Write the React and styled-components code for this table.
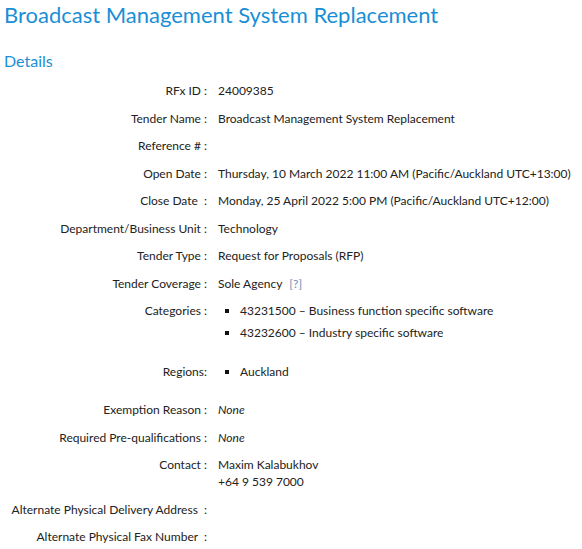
import React from 'react';
import styled, { createGlobalStyle } from 'styled-components';

const GlobalStyle = createGlobalStyle`
  html, body {
    margin: 0;
    padding: 0;
    background: #fff;
  }
  body {
    font-family: 'Lato', 'Liberation Sans', sans-serif;
    color: #222;
  }
`;

const Page = styled.div`
  padding: 0 4px;
`;

const Title = styled.h1`
  margin: 0;
  padding-top: 3px;
  font-size: 22px;
  font-weight: 400;
  line-height: 24px;
  color: #1a8fd6;
`;

const SectionTitle = styled.h2`
  margin: 24px 0 6px;
  font-size: 16px;
  font-weight: 400;
  line-height: 20px;
  color: #1a8fd6;
`;

const Details = styled.div`
  display: grid;
  grid-template-columns: 203px 1fr;
  font-size: 12px;
  line-height: 17px;
`;

const Label = styled.div`
  text-align: right;
  padding: 5.25px 0;
  white-space: pre;
`;

const Value = styled.div`
  padding: 5.25px 0 5.25px 11px;
  font-style: ${(p) => (p.$italic ? 'italic' : 'normal')};
`;

const List = styled.ul`
  list-style: none;
  margin: 0;
  padding: 0 0 6px 22px;
`;

const Item = styled.li`
  position: relative;
  margin-bottom: 5px;

  &::before {
    content: '';
    position: absolute;
    left: -15px;
    top: 7px;
    width: 4px;
    height: 4px;
    background: #111;
  }
`;

const Help = styled.span`
  margin-left: 7px;
  color: #6b8fb3;
`;

const rows = [
  { label: 'RFx ID :', value: '24009385' },
  { label: 'Tender Name :', value: 'Broadcast Management System Replacement' },
  { label: 'Reference # :', value: '' },
  { label: 'Open Date :', value: 'Thursday, 10 March 2022 11:00 AM (Pacific/Auckland UTC+13:00)' },
  { label: 'Close Date  :', value: 'Monday, 25 April 2022 5:00 PM (Pacific/Auckland UTC+12:00)' },
  { label: 'Department/Business Unit :', value: 'Technology' },
  { label: 'Tender Type :', value: 'Request for Proposals (RFP)' },
];

const App = () => {
  return (
    <Page>
      <GlobalStyle />
      <Title>Broadcast Management System Replacement</Title>
      <SectionTitle>Details</SectionTitle>
      <Details>
        {rows.map((r) => (
          <React.Fragment key={r.label}>
            <Label>{r.label}</Label>
            <Value>{r.value}</Value>
          </React.Fragment>
        ))}

        <Label>Tender Coverage :</Label>
        <Value>
          Sole Agency<Help>[?]</Help>
        </Value>

        <Label>Categories :</Label>
        <Value>
          <List>
            <Item>43231500 – Business function specific software</Item>
            <Item>43232600 – Industry specific software</Item>
          </List>
        </Value>

        <Label>Regions:</Label>
        <Value>
          <List>
            <Item>Auckland</Item>
          </List>
        </Value>

        <Label>Exemption Reason :</Label>
        <Value $italic>None</Value>

        <Label>Required Pre-qualifications :</Label>
        <Value $italic>None</Value>

        <Label>Contact :</Label>
        <Value>
          Maxim Kalabukhov
          <br />
          +64 9 539 7000
        </Value>

        <Label>Alternate Physical Delivery Address  :</Label>
        <Value />

        <Label>Alternate Physical Fax Number  :</Label>
        <Value />
      </Details>
    </Page>
  );
};

export default App;
